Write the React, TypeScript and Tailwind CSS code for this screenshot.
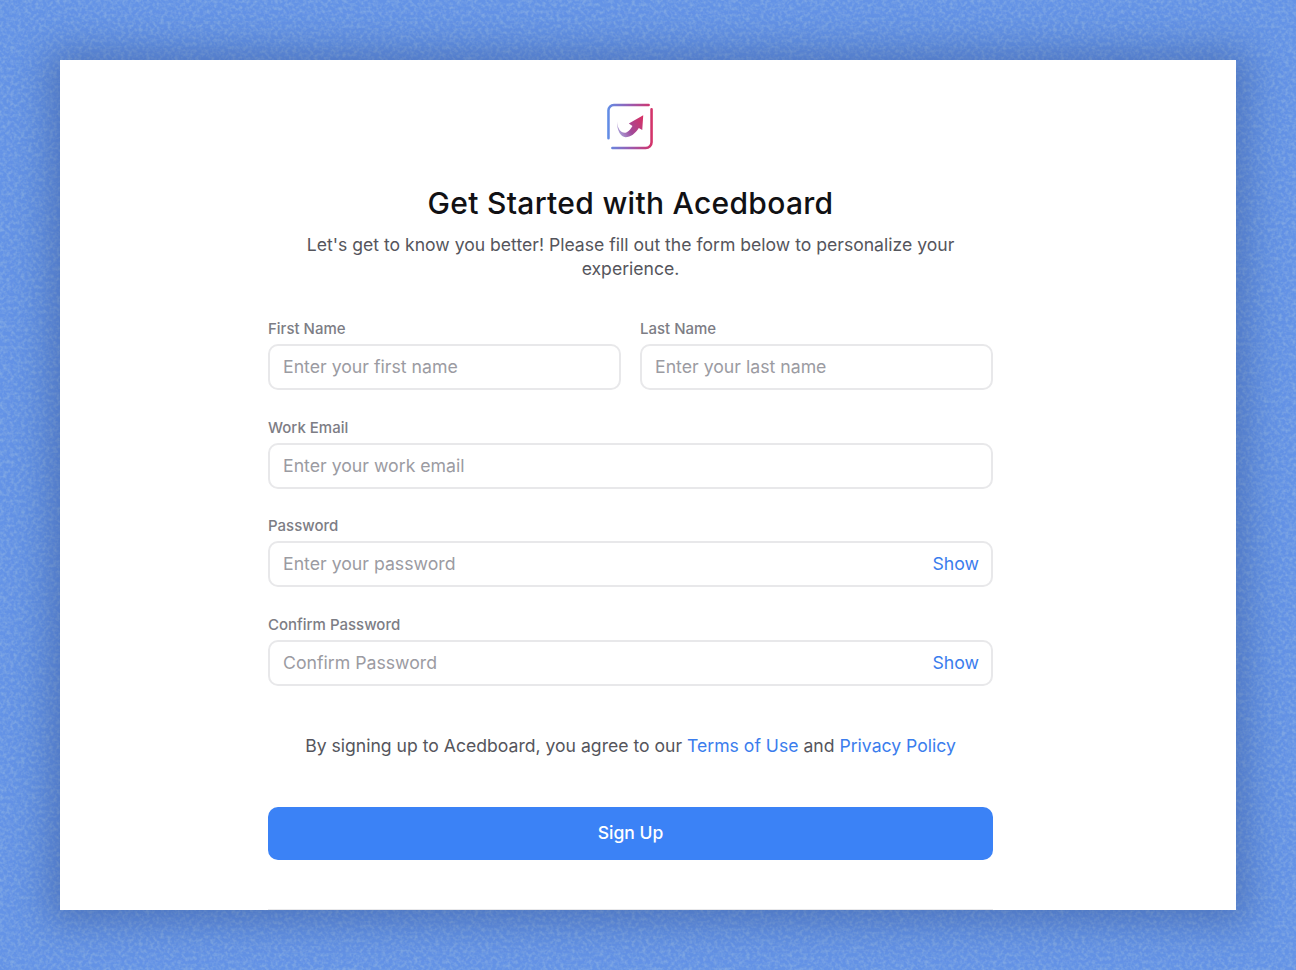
const font = { fontFamily: 'Inter, "Noto Sans", sans-serif' };

function Logo() {
  return (
    <svg width="47" height="47" viewBox="0 0 48 48" fill="none">
      <defs>
        <linearGradient id="frame" x1="0" y1="24" x2="48" y2="24" gradientUnits="userSpaceOnUse">
          <stop offset="0" stopColor="#5f8fe8" />
          <stop offset="0.5" stopColor="#9a5bb0" />
          <stop offset="1" stopColor="#d92f62" />
        </linearGradient>
        <linearGradient id="arrow" x1="10" y1="30" x2="37" y2="14" gradientUnits="userSpaceOnUse">
          <stop offset="0" stopColor="#a9a9e0" />
          <stop offset="0.4" stopColor="#a04a9a" />
          <stop offset="1" stopColor="#d92f62" />
        </linearGradient>
      </defs>
      <path d="M42.500 2H7a5.500 5.500 0 0 0-5.500 5.500V36" stroke="url(#frame)" strokeWidth="2.600" strokeLinecap="round" />
      <path d="M45.500 6.500V40a6 6 0 0 1-6 6H5.500" stroke="url(#frame)" strokeWidth="2.600" strokeLinecap="round" />
      <path
        d="M10.300 19C10.500 26 14 30.500 18 30.500 21 30.500 24 27 26 23.500L22.300 21 37 12.500 36 27.500 32.500 25.500C29 31 24 35 19 35 14 35 10 28 10.300 19z"
        fill="url(#arrow)"
      />
    </svg>
  );
}

function Field({ label, placeholder, show }: { label: string; placeholder: string; show?: boolean }) {
  return (
    <div className="flex min-w-0 flex-1 flex-col">
      <label className="h-[24px] text-[15px] leading-[18px] font-medium text-[#7d7d85]">{label}</label>
      <div className="flex h-[46px] items-center justify-between rounded-[10px] border-2 border-[#e8e8ea] bg-white pr-[12px] pl-[13px]">
        <span className="text-[17.700px] leading-[24px] text-[#9b9ba2]">{placeholder}</span>
        {show && <span className="text-[17.700px] leading-[24px] text-[#3b7ded]">Show</span>}
      </div>
    </div>
  );
}

export default function App() {
  return (
    <div className="relative min-h-[970px] overflow-hidden bg-[#6493e6] p-[60px]" style={font}>
      <svg className="absolute inset-0 h-full w-full" aria-hidden="true">
        <filter id="grain">
          <feTurbulence type="fractalNoise" baseFrequency="0.28" numOctaves="2" seed="7" />
          <feColorMatrix values="0 0 0 0 0.24  0 0 0 0 0.42  0 0 0 0 0.78  2.400 0 0 0 -0.95" />
        </filter>
        <rect width="100%" height="100%" filter="url(#grain)" opacity="0.8" />
      </svg>
      <main className="relative flex h-[850px] w-[1176px] flex-col items-center bg-white pt-[43px] pr-[243px] pl-[208px] shadow-[0_2px_36px_12px_rgba(42,70,130,0.4)]">
        <Logo />
        <h1 className="mt-[35px] text-[30px] leading-[36px] font-medium tracking-[0.3px] whitespace-nowrap text-[#111114]">
          Get Started with Acedboard
        </h1>
        <p className="mt-[12px] w-[680px] text-center text-[17.600px] leading-[24px] text-[#55555c]">
          Let's get to know you better! Please fill out the form below to personalize your experience.
        </p>
        <form className="mt-[39px] flex w-full flex-col gap-[28.700px]">
          <div className="flex gap-[19px]">
            <Field label="First Name" placeholder="Enter your first name" />
            <Field label="Last Name" placeholder="Enter your last name" />
          </div>
          <Field label="Work Email" placeholder="Enter your work email" />
          <Field label="Password" placeholder="Enter your password" show />
          <Field label="Confirm Password" placeholder="Confirm Password" show />
        </form>
        <p className="mt-[48px] text-[17.600px] leading-[24px] whitespace-nowrap text-[#55555c]">
          By signing up to Acedboard, you agree to our <span className="text-[#3b7ded]">Terms of Use</span> and{' '}
          <span className="text-[#3b7ded]">Privacy Policy</span>
        </p>
        <button
          type="button"
          className="mt-[49px] h-[53px] w-full shrink-0 rounded-[10px] bg-[#3b82f6] text-[17.500px] font-medium text-white"
        >
          Sign Up
        </button>
        <div className="mt-auto h-px w-full bg-[#e8e8ea]" />
      </main>
    </div>
  );
}
